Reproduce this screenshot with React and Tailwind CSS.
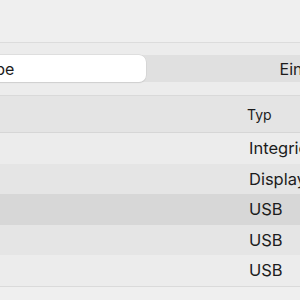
import React from 'react';

const rows = [
  { name: 'MacBook Pro-Lautsprecher', type: 'Integriert', bg: 'bg-[#ececec]' },
  { name: 'LG UltraFine', type: 'DisplayPort', bg: 'bg-[#e5e5e5]' },
  { name: 'USB Audio', type: 'USB', bg: 'bg-[#d7d7d7]' },
  { name: 'USB Headset', type: 'USB', bg: 'bg-[#e5e5e5]' },
  { name: 'USB Interface', type: 'USB', bg: 'bg-[#ececec]' },
];

const App = () => {
  return (
    <div
      className="w-[300px] h-[300px] overflow-hidden bg-[#efefef] text-[#1c1c1c]"
      style={{ fontFamily: 'Inter, "Liberation Sans", sans-serif' }}
    >
      {/* Title area */}
      <div className="h-[43px] border-b border-[#dcdcdc]" />

      {/* Segmented control */}
      <div className="h-[53px] pt-[12px] bg-[#ececec] border-b border-[#d9d9d9]">
        <div className="flex ml-[-182px] w-[656px] h-[27px] rounded-[7px] bg-[#e0e0e0]">
          <div className="w-[328px] h-full flex items-center justify-center bg-white rounded-[7px] shadow-[0_0_0_0.5px_#cfcfcf,0_1px_1px_rgba(0,0,0,0.12)] text-[16px] pr-[2px]">
            Ausgabe
          </div>
          <div className="w-[328px] h-full flex items-center justify-center text-[16px]">
            Eingabe
          </div>
        </div>
      </div>

      {/* Table */}
      <div className="flex flex-col">
        <div className="h-[37px] flex items-center bg-[#e4e4e4] border-b border-[#d6d6d6] text-[14px]">
          <div className="w-[247px] shrink-0" />
          <div className="pt-[1px]">Typ</div>
        </div>
        {rows.map((r) => (
          <div key={r.name} className={`h-[30.6px] flex items-center ${r.bg} text-[16.5px]`}>
            <div className="w-[249px] shrink-0" />
            <div className="whitespace-nowrap">{r.type}</div>
          </div>
        ))}
        <div className="border-t border-[#dadada]" />
      </div>
    </div>
  );
};

export default App;
